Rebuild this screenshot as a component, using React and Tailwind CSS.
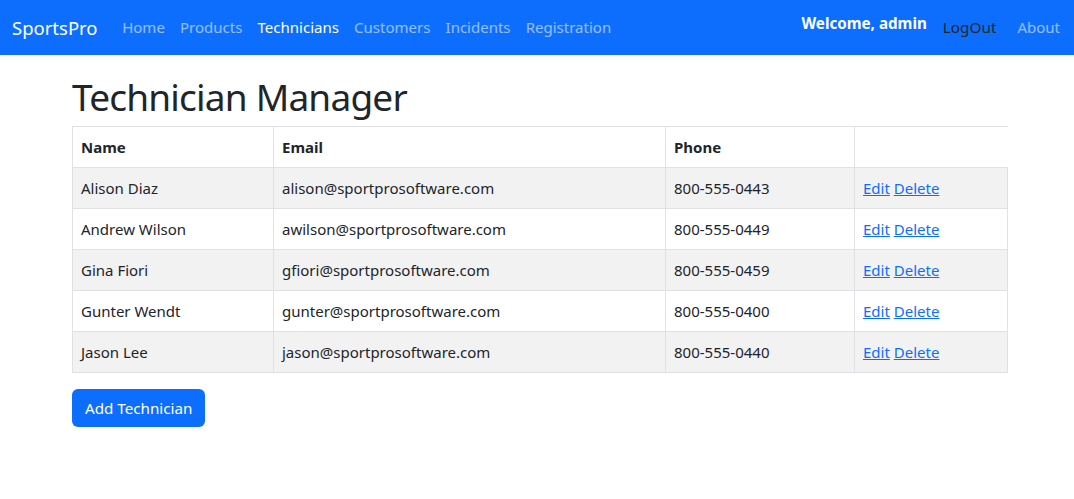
import React from "react";

const rows = [
  ["Alison Diaz", "alison@sportprosoftware.com", "800-555-0443"],
  ["Andrew Wilson", "awilson@sportprosoftware.com", "800-555-0449"],
  ["Gina Fiori", "gfiori@sportprosoftware.com", "800-555-0459"],
  ["Gunter Wendt", "gunter@sportprosoftware.com", "800-555-0400"],
  ["Jason Lee", "jason@sportprosoftware.com", "800-555-0440"],
];

export default function App() {
  const font = { fontFamily: '"Noto Sans", "Open Sans", sans-serif' };
  return (
    <div style={font} className="min-h-[499px] bg-white text-[#212529] text-[15px]">
      <nav className="h-[55px] bg-[#0d6efd] flex items-center pl-[12px] pr-[6px]">
        <span className="text-[18.5px] text-white mr-[17px]">SportsPro</span>
        <div className="flex items-center text-[15px]">
          <a className="px-[7.6px] text-white/55">Home</a>
          <a className="px-[7.6px] text-white/55">Products</a>
          <a className="px-[7.6px] text-white">Technicians</a>
          <a className="px-[7.6px] text-white/55">Customers</a>
          <a className="px-[7.6px] text-white/55">Incidents</a>
          <a className="px-[7.6px] text-white/55">Registration</a>
        </div>
        <div className="ml-auto flex items-center text-[15px]">
          <span className="font-bold text-[15.2px] text-white -mt-[8px] mr-[16px]">Welcome, admin</span>
          <a className="pr-[8px] text-[#212529] text-[15.3px]">LogOut</a>
          <a className="px-[8px] ml-[5px] text-white/55">About</a>
        </div>
      </nav>
      <main className="pl-[72px] pt-[20px]">
        <h1 className="text-[37px] leading-[44px] tracking-[-0.8px] font-normal mb-[7px]">Technician Manager</h1>
        <table className="w-[936px] border-collapse text-[15px]">
          <thead>
            <tr className="h-[41px] border-t border-[#dee2e6]">
              <th className="text-left font-bold px-[8px] border-x border-[#dee2e6] w-[201px]">Name</th>
              <th className="text-left font-bold px-[8px] border-x border-[#dee2e6] w-[392px]">Email</th>
              <th className="text-left font-bold px-[8px] border-x border-[#dee2e6] w-[189px]">Phone</th>
              <th className="border-l border-[#dee2e6]"></th>
            </tr>
          </thead>
          <tbody>
            {rows.map((r, i) => (
              <tr key={i} className={"h-[41px] border border-[#dee2e6] " + (i % 2 === 0 ? "bg-[#f2f2f2]" : "bg-white")}>
                <td className="px-[8px] border border-[#dee2e6]">{r[0]}</td>
                <td className="px-[8px] border border-[#dee2e6]">{r[1]}</td>
                <td className="px-[8px] border border-[#dee2e6]">{r[2]}</td>
                <td className="px-[8px] border border-[#dee2e6]">
                  <a className="text-[#0d6efd] underline">Edit</a>{" "}
                  <a className="text-[#0d6efd] underline">Delete</a>
                </td>
              </tr>
            ))}
          </tbody>
        </table>
        <button className="mt-[16px] h-[38px] px-[13px] bg-[#0d6efd] text-white text-[15.2px] rounded-[6px]">Add Technician</button>
      </main>
    </div>
  );
}
